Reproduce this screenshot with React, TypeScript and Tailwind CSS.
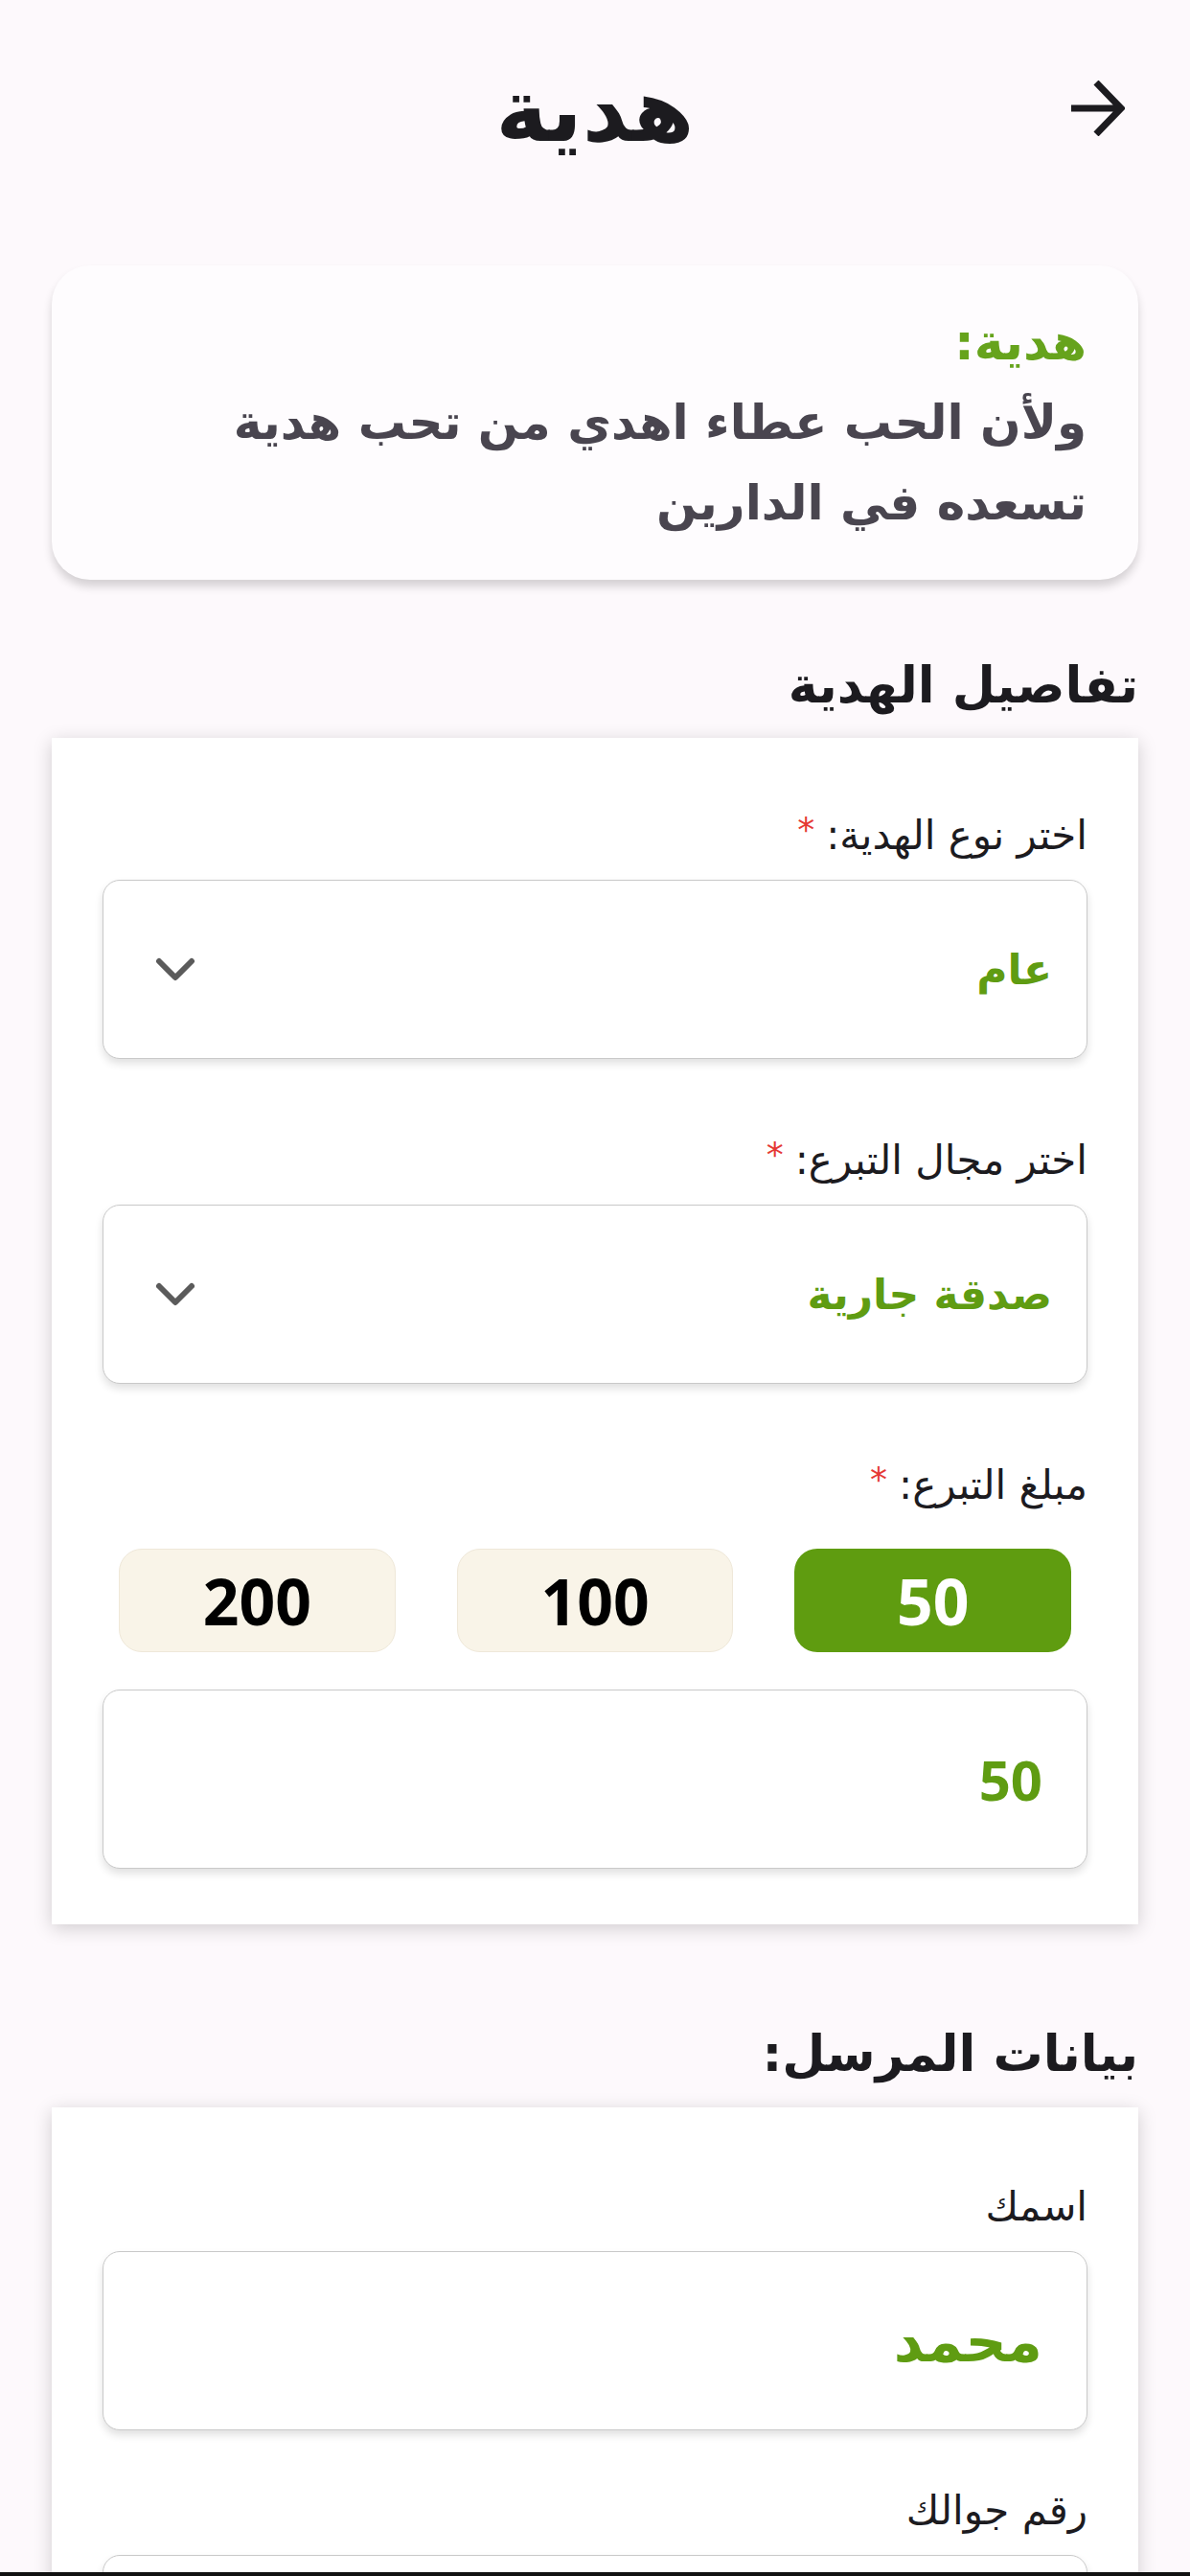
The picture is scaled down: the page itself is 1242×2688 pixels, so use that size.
import React from 'react';

const kufi = { fontFamily: '"DejaVu Sans", "Noto Sans", sans-serif' };

const Chevron: React.FC = () => (
  <svg width="44" height="28" viewBox="0 0 44 28" fill="none">
    <path d="M5 5 L22 22 L39 5" stroke="#5b5b5b" strokeWidth="6" strokeLinecap="round" strokeLinejoin="round" />
  </svg>
);

const Label: React.FC<{ text: string; required?: boolean }> = ({ text, required }) => (
  <div className="text-[42px] leading-[52px] text-[#1c1b1f] mb-5 flex items-start gap-3">
    <span>{text}</span>
    {required && <span className="text-[#e53935] text-[36px] leading-[40px]">*</span>}
  </div>
);

const SelectBox: React.FC<{ value: string }> = ({ value }) => (
  <div className="h-[187px] bg-white border-[1.5px] border-[#c9c9c9] rounded-[18px] shadow-[0_5px_8px_rgba(0,0,0,0.12)] flex items-center justify-between pr-9 pl-[53px]">
    <span className="text-[44px] font-bold text-[#5f9c12]">{value}</span>
    <Chevron />
  </div>
);

const InputBox: React.FC<{ value?: string; numeric?: boolean }> = ({ value, numeric }) => (
  <div className="h-[187px] bg-white border-[1.5px] border-[#c9c9c9] rounded-[18px] shadow-[0_5px_8px_rgba(0,0,0,0.12)] flex items-center pr-[46px]">
    <span
      className={numeric ? 'text-[58px] font-bold text-[#5f9c12]' : 'text-[60px] font-bold text-[#5f9c12]'}
      style={numeric ? { fontFamily: '"Open Sans", sans-serif' } : kufi}
    >
      {value}
    </span>
  </div>
);

const App: React.FC = () => {
  const amounts = ['50', '100', '200'];
  return (
    <div
      dir="rtl"
      className="w-[1242px] h-[2688px] overflow-hidden bg-[#fdf9fc] flex flex-col"
      style={{ fontFamily: '"DejaVu Sans", "Noto Sans", sans-serif' }}
    >
      <div className="flex-1 overflow-hidden px-[54px]">
        {/* Header */}
        <div className="h-[232px] pt-[70px] flex items-start">
          <div className="w-[90px] pt-[14px] pr-[14px]">
            <svg width="56" height="58" viewBox="0 0 56 58" fill="none">
              <path d="M0 29 H52 M26 2 L52 29 L26 56" stroke="#1c1b1f" strokeWidth="7" />
            </svg>
          </div>
          <div className="flex-1 text-center text-[92px] leading-[92px] font-bold text-[#1c1b1f]" style={kufi}>
            هدية
          </div>
          <div className="w-[90px]" />
        </div>

        {/* Intro card */}
        <div className="mt-[45px] bg-[#fefcfe] rounded-[40px] shadow-[0_7px_10px_rgba(0,0,0,0.16)] px-[54px] py-[38px] text-[50px] leading-[84px]" style={kufi}>
          <div className="text-[#66a31c] font-bold text-[52px]">هدية:</div>
          <div className="text-[#49454f] font-bold">ولأن الحب عطاء اهدي من تحب هدية</div>
          <div className="text-[#49454f] font-bold">تسعده في الدارين</div>
        </div>

        {/* Gift details */}
        <div className="mt-[80px] mb-[25px] text-[52px] leading-[60px] font-bold text-[#1c1b1f]" style={kufi}>
          تفاصيل الهدية
        </div>
        <div className="bg-white shadow-[0_4px_18px_rgba(0,0,0,0.18)] px-[53px] pt-[76px] pb-[58px] flex flex-col">
          <Label text="اختر نوع الهدية:" required />
          <SelectBox value="عام" />

          <div className="mt-[80px]">
            <Label text="اختر مجال التبرع:" required />
            <SelectBox value="صدقة جارية" />
          </div>

          <div className="mt-[80px]">
            <Label text="مبلغ التبرع:" required />
          </div>
          <div className="mt-[20px] px-[17px] grid grid-cols-3 gap-[64px]">
            {amounts.map((a, i) => (
              <div
                key={a}
                className={
                  i === 0
                    ? 'h-[108px] rounded-[24px] bg-[#5f9c10] text-white flex items-center justify-center text-[66px] font-bold'
                    : 'h-[108px] rounded-[24px] bg-[#f9f4e8] border border-[#efe8d9] text-black flex items-center justify-center text-[66px] font-bold'
                }
                style={{ fontFamily: '"Open Sans", sans-serif' }}
              >
                {a}
              </div>
            ))}
          </div>
          <div className="mt-[39px]">
            <InputBox value="50" numeric />
          </div>
        </div>

        {/* Sender data */}
        <div className="mt-[105px] mb-[26px] text-[52px] leading-[60px] font-bold text-[#1c1b1f]" style={kufi}>
          بيانات المرسل:
        </div>
        <div className="bg-white shadow-[0_4px_18px_rgba(0,0,0,0.18)] px-[53px] pt-[78px] pb-[55px] flex flex-col">
          <Label text="اسمك" />
          <InputBox value="محمد" />
          <div className="mt-[58px]">
            <Label text="رقم جوالك" />
            <InputBox />
          </div>
        </div>
      </div>
      <div className="h-[4px] bg-[#111]" />
    </div>
  );
};

export default App;
